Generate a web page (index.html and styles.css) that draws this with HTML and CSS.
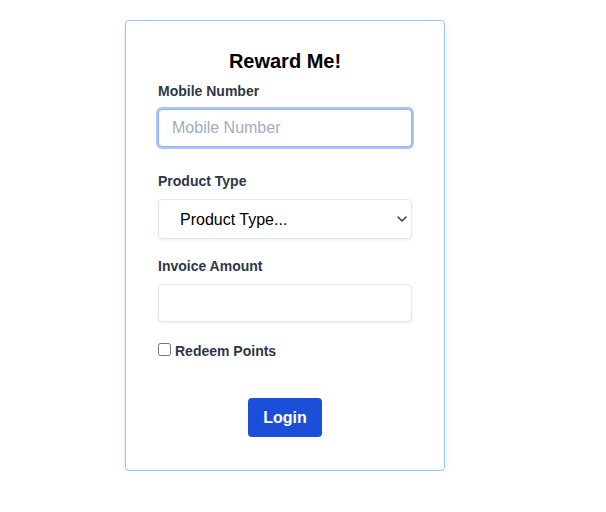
FILE: index.html
```html
<!DOCTYPE html>
<html lang="en">
<head>
  <meta charset="UTF-8" />
  <meta name="viewport" content="width=device-width, initial-scale=1.0"/>
  <title>Reward Me!</title>
  <link rel="stylesheet" href="styles.css">
</head>
<body>
  <form class="card">
    <h2 class="title">Reward Me!</h2>

    <label class="label" for="mobile">Mobile Number</label>
    <input class="field focused" type="text" id="mobile" placeholder="Mobile Number">

    <label class="label label-gap" for="product">Product Type</label>
    <div class="select-wrap">
      <select class="field select" id="product">
        <option>Product Type...</option>
      </select>
      <svg class="chevron" width="10" height="6" viewBox="0 0 10 6">
        <path d="M1 1l4 4 4-4" fill="none" stroke="#333" stroke-width="1.4" stroke-linecap="round" stroke-linejoin="round"/>
      </svg>
    </div>

    <label class="label label-gap2" for="amount">Invoice Amount</label>
    <input class="field" type="number" id="amount">

    <label class="check">
      <input type="checkbox" id="redeem">
      <span>Redeem Points</span>
    </label>

    <div class="actions">
      <button type="button" class="btn">Login</button>
    </div>
  </form>
</body>
</html>
```

FILE: styles.css
```css
body {
  margin: 0;
  padding-top: 20px;
  font-family: "Liberation Sans", Arial, sans-serif;
  background: #fff;
}
.card {
  width: 320px;
  box-sizing: border-box;
  margin-left: 125px;
  padding: 26px 32px 33px;
  border: 1px solid #93c5fd;
  border-radius: 4px;
  box-shadow: 0 4px 8px rgba(0, 0, 0, 0.08);
  display: flex;
  flex-direction: column;
}
.title {
  margin: 0 0 6px;
  font-size: 20px;
  line-height: 28px;
  text-align: center;
  color: #000;
}
.label {
  display: block;
  font-size: 14px;
  line-height: 20px;
  font-weight: bold;
  color: #2d3748;
  margin-bottom: 8px;
}
.label-gap {
  margin-top: 24px;
}
.label-gap2 {
  margin-top: 17px;
}
.field {
  width: 100%;
  box-sizing: border-box;
  height: 38px;
  padding: 0 13px;
  font-family: inherit;
  font-size: 16px;
  color: #000;
  background: #fff;
  border: 1px solid #e2e8f0;
  border-radius: 4px;
  box-shadow: 0 1px 3px rgba(0, 0, 0, 0.08);
  outline: none;
}
.field::placeholder {
  color: #a0aec0;
}
.focused {
  border-color: #90b4f5;
  box-shadow: 0 0 0 2px #a9c6fa;
}
.select-wrap {
  position: relative;
}
.select {
  -webkit-appearance: none;
  appearance: none;
  height: 40px;
  padding-left: 21px;
}
.chevron {
  position: absolute;
  right: 5px;
  top: 17px;
  pointer-events: none;
}
.check {
  display: flex;
  align-items: center;
  gap: 4px;
  margin-top: 19px;
  font-size: 14px;
  line-height: 20px;
  font-weight: bold;
  color: #2d3748;
}
.check input {
  margin: 0;
  width: 13px;
  height: 13px;
  position: relative;
  top: -2px;
}
.actions {
  display: flex;
  justify-content: center;
  margin-top: 37px;
}
.btn {
  width: 74px;
  height: 39px;
  border: none;
  border-radius: 4px;
  background: #1c4fd8;
  color: #fff;
  font-family: inherit;
  font-size: 16px;
  font-weight: bold;
  cursor: pointer;
}
```
